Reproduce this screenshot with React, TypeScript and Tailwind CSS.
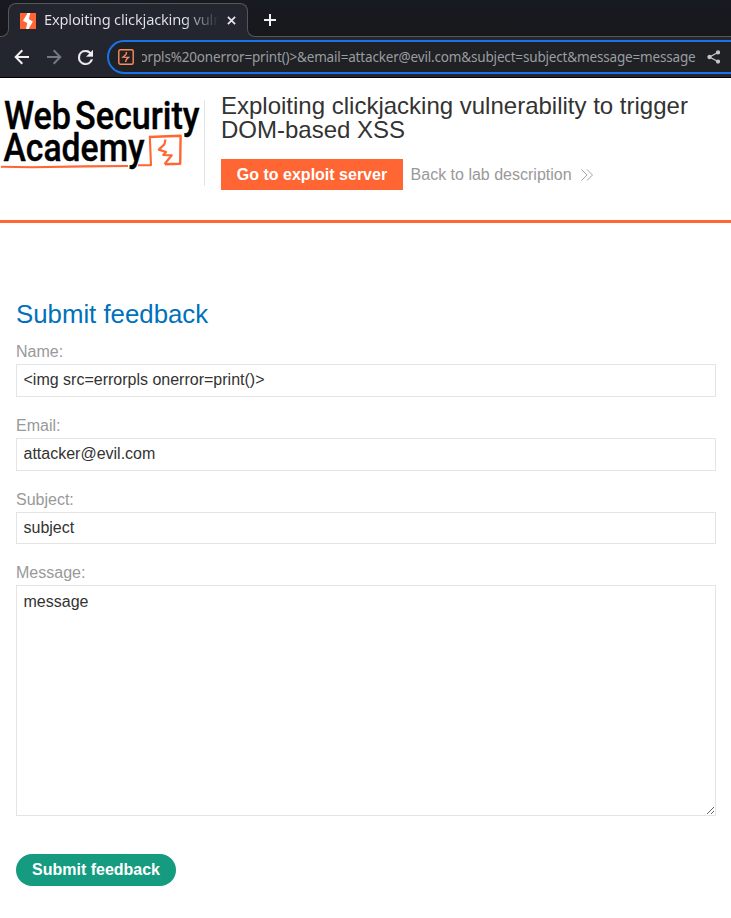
import React from 'react';

const sans = "font-['Liberation_Sans',Arial,sans-serif]";
const noto = "font-['Noto_Sans',sans-serif]";

function Bolt({ className }: { className?: string }) {
  return (
    <svg viewBox="0 0 16 16" className={className} fill="currentColor">
      <path d="M7.6 0H10.2L8.9 6.2 12.9 8.4 8.6 16H6.1L7.2 10 3 7.8Z" />
    </svg>
  );
}

function TabStrip() {
  return (
    <div className="flex h-[37px] items-end border-b border-[#55565a] bg-linear-to-b from-[#181a22] to-[#17181b]">
      <div className="relative top-px ml-2 flex h-[34px] w-[240px] shrink-0 items-center rounded-t-lg border border-b-0 border-[#55565a] bg-[#23252f] pl-[11px]">
        <div className="absolute bottom-0 -left-[8px] h-2 w-2 bg-[#23252f]">
          <div className="h-2 w-2 rounded-br-lg border-r border-b border-[#55565a] bg-[#17181b]" />
        </div>
        <div className="absolute -right-[8px] bottom-0 h-2 w-2 bg-[#23252f]">
          <div className="h-2 w-2 rounded-bl-lg border-b border-l border-[#55565a] bg-[#17181b]" />
        </div>
        <div className="h-4 w-4 shrink-0 bg-[#ff6633] text-white">
          <Bolt className="h-4 w-4" />
        </div>
        <div className={`${noto} mb-[3px] ml-2 w-[175px] overflow-hidden bg-linear-to-r from-[#e3e5e8] from-80% to-transparent bg-clip-text text-[14.67px] leading-[22px] tracking-[-0.2px] whitespace-nowrap text-transparent`}>
          Exploiting clickjacking vulnerability
        </div>
        <svg viewBox="0 0 10 10" className="ml-[8px] h-[9px] w-[9px] shrink-0" stroke="#e3e5e8" strokeWidth="2">
          <path d="M1 1 9 9M9 1 1 9" />
        </svg>
      </div>
      <svg viewBox="0 0 12 12" className="mb-[10px] ml-4 h-3 w-3" stroke="#f1f1f1" strokeWidth="2">
        <path d="M6 0V12M0 6H12" />
      </svg>
    </div>
  );
}

function Toolbar() {
  return (
    <div className="flex h-[41px] items-center border-b border-black bg-[#23252f] pl-[14px]">
      <svg viewBox="0 0 16 16" className="h-4 w-4 shrink-0" fill="none" stroke="#f1f1f1" strokeWidth="2">
        <path d="M15 8H2M8.3 1.3 1.7 8 8.3 14.7" />
      </svg>
      <svg viewBox="0 0 16 16" className="ml-4 h-4 w-4 shrink-0" fill="none" stroke="#777980" strokeWidth="2">
        <path d="M1 8H14M7.7 1.3 14.3 8 7.7 14.7" />
      </svg>
      <svg viewBox="4 4 16 16" className="ml-4 h-[15px] w-[15px] shrink-0" fill="#f1f1f1" stroke="#f1f1f1" strokeWidth="0.4">
        <path d="M17.65 6.35A7.96 7.96 0 0 0 12 4a8 8 0 1 0 7.73 10h-2.08A6 6 0 1 1 12 6c1.66 0 3.14.69 4.22 1.78L13 11h7V4z" />
      </svg>
      <div className="ml-[13.5px] flex h-[34px] flex-1 items-center rounded-l-full border-2 border-r-0 border-[#1a73e8] bg-[#202124] pl-[9px]">
        <svg viewBox="0 0 16 16" className="h-4 w-4 shrink-0" fill="none" stroke="#ff8a5c" strokeWidth="1.4">
          <rect x="0.8" y="0.8" width="14.4" height="14.4" rx="1.5" />
          <path d="M8.6 3 8 5.5 5 8.2 10.6 8.3 8.3 10.5 7.6 13" />
        </svg>
        <div className={`${noto} ml-[8px] flex w-[554px] shrink-0 justify-end overflow-hidden text-[13.5px] leading-5 tracking-[-0.17px] whitespace-nowrap text-[#999da2]`}>
          <span>orpls%20onerror=print()&gt;&amp;email=attacker@evil.com&amp;subject=subject&amp;message=message</span>
        </div>
        <svg viewBox="0 0 14 14" className="ml-[11px] h-[14px] w-[14px] shrink-0" fill="#c4c6c9" stroke="#c4c6c9" strokeWidth="1.3">
          <path d="M11 2.5 2.5 7 11 11.5" fill="none" />
          <circle cx="11" cy="2.4" r="1.5" />
          <circle cx="2.5" cy="7" r="1.5" />
          <circle cx="11" cy="11.6" r="1.5" />
        </svg>
      </div>
    </div>
  );
}

function Logo() {
  return (
    <svg viewBox="0 0 204 86" className="h-[86px] w-[204px] shrink-0">
      <g className="font-[Roboto,sans-serif] text-[38px] font-medium" fill="#000" stroke="#000" strokeWidth="0.4">
        <text x="4" y="28.7" textLength="67" lengthAdjust="spacingAndGlyphs">Web</text>
        <text x="75" y="28.7" textLength="124.5" lengthAdjust="spacingAndGlyphs">Security</text>
        <text x="3.5" y="60.8" textLength="141" lengthAdjust="spacingAndGlyphs">Academy</text>
      </g>
      <g fill="none" stroke="#ff6633" strokeLinejoin="round">
        <path d="M1 66.8 32 67.3 85 66.4 128 66M138 65.3 151 65.1 149.8 36.2" strokeWidth="2.1" />
        <path d="M149 37 180.6 35.7 180.2 63.8 165 64.3" strokeWidth="2.4" />
        <path d="M165.5 39.5 164.4 44.3 158.8 49.6 166 52 163.3 55 171.7 55.3 164.5 64.2" strokeWidth="2.2" />
      </g>
    </svg>
  );
}

function Header() {
  return (
    <header className="flex h-[145px] border-b-[3px] border-[#ff6633] pt-[22px]">
      <Logo />
      <div className="-mt-[6px] flex-1">
        <div className="flex">
          <div className="mt-[6px] h-[86px] w-px shrink-0 bg-[#e4e4e4]" />
          <div className="pl-4">
            <h1 className="w-[490px] text-2xl leading-6 text-[#333332]">
              Exploiting clickjacking vulnerability to trigger DOM-based XSS
            </h1>
            <div className="mt-[17px] flex h-[31px] items-center">
              <button className="h-[31px] w-[182px] bg-[#ff6633] text-base leading-none font-bold text-white">
                Go to exploit server
              </button>
              <a className="ml-[7.6px] text-base leading-none text-[#999]">Back to lab description</a>
              <svg viewBox="0 0 12 12" className="ml-[9px] h-3 w-3" fill="none" stroke="#999" strokeWidth="0.9">
                <path d="M.5.5 6 6 .5 11.5M6 .5 11.5 6 6 11.5" />
              </svg>
            </div>
          </div>
        </div>
      </div>
    </header>
  );
}

function Field({ label, value, size }: { label: string; value: string; size: string }) {
  return (
    <div className="mb-5">
      <label className="block h-[21px] text-base leading-[18px] text-[#999]">{label}</label>
      <input
        className={`block w-[700px] border border-[#e4e4e4] bg-white pr-1 pl-[6.5px] text-base leading-[18px] text-[#333332] outline-none ${size}`}
        defaultValue={value}
      />
    </div>
  );
}

export default function App() {
  return (
    <div className={`${sans} h-[918px] w-[731px] overflow-hidden bg-white`}>
      <TabStrip />
      <Toolbar />
      <Header />
      <main className="px-4 pt-[76px]">
        <h2 className="h-[44px] text-[25.8px] leading-[30px] text-[#0071bc]">Submit feedback</h2>
        <Field label="Name:" value="<img src=errorpls onerror=print()>" size="h-[33px] pb-[2px]" />
        <Field label="Email:" value="attacker@evil.com" size="h-[33px] pb-[2px]" />
        <Field label="Subject:" value="subject" size="h-[32px] pb-0" />
        <label className="block h-[21px] text-base leading-[18px] text-[#999]">Message:</label>
        <textarea
          className="block h-[231px] w-[700px] resize border border-[#e4e4e4] bg-white px-[6.5px] py-[7px] text-base leading-[18px] text-[#333332] outline-none"
          defaultValue="message"
        />
        <button className="mt-[38px] h-8 w-40 rounded-full bg-[#159b80] text-base leading-none font-bold text-white">
          Submit feedback
        </button>
      </main>
    </div>
  );
}
